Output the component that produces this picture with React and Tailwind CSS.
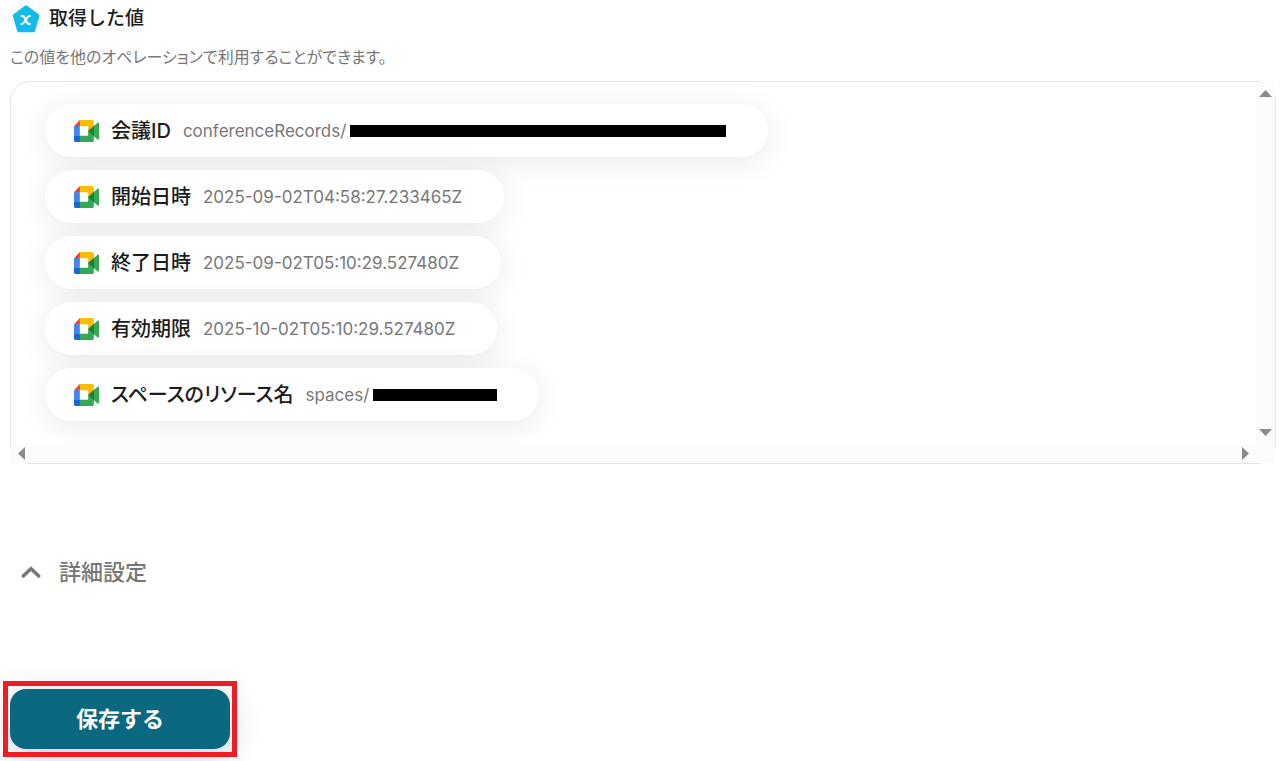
const fields = [
  { label: '会議ID', value: 'conferenceRecords/', hidden: 'w-[376px]' },
  { label: '開始日時', value: '2025-09-02T04:58:27.233465Z' },
  { label: '終了日時', value: '2025-09-02T05:10:29.527480Z' },
  { label: '有効期限', value: '2025-10-02T05:10:29.527480Z' },
  { label: 'スペースのリソース名', value: 'spaces/', hidden: 'w-[124px]' },
];

function ValueBadge() {
  return (
    <svg viewBox="0 0 28 28" className="size-7 shrink-0" aria-hidden="true">
      <path
        d="M14 2.300 L25.600 10.800 L21.300 25.400 H6.900 L2.600 10.800 Z"
        fill="#13baec"
        stroke="#13baec"
        strokeWidth="3.600"
        strokeLinejoin="round"
      />
      <path
        d="M9.600 11 C11.200 10.600 11.800 11.200 12.500 12.600 L14.900 17.400 C15.600 18.800 16.400 19.300 18 19"
        fill="none"
        stroke="#fff"
        strokeWidth="2.200"
        strokeLinecap="round"
      />
      <path
        d="M18 11 C16.600 10.900 16 11.600 15.200 12.700 L12.200 17.300 C11.400 18.500 10.700 19.100 9.400 19"
        fill="none"
        stroke="#fff"
        strokeWidth="1.900"
        strokeLinecap="round"
      />
    </svg>
  );
}

function MeetIcon() {
  return (
    <svg viewBox="0 0 87.5 72" preserveAspectRatio="none" className="h-[22px] w-[25px] shrink-0" aria-hidden="true">
      <path fill="#00832d" d="M49.500 36l8.530 9.750 11.470 7.330 2-17.020-2-16.640-11.690 6.440z" />
      <path fill="#1967d2" d="M0 51.500V66c0 3.315 2.685 6 6 6h14.500l3-10.960-3-9.540-9.950-3z" />
      <path fill="#ea4335" d="M20.500 0L0 20.500l10.550 3 9.950-3 2.950-9.410z" />
      <path fill="#4285f4" d="M20.500 20.500H0v31h20.500z" />
      <path fill="#34a853" d="M82.600 8.680L69.500 19.420v33.660l13.160 10.790c1.970 1.540 4.850.135 4.850-2.370V11c0-2.535-2.945-3.925-4.910-2.320zM49.500 36v15.500h-29V72h43c3.315 0 6-2.685 6-6V53.080z" />
      <path fill="#fbbc04" d="M63.500 0h-43v20.500h29V36l20-16.570V6c0-3.315-2.685-6-6-6z" />
      <path fill="#188038" d="M69.500 19.420v33.660L49.500 36z" />
    </svg>
  );
}

function ScrollArrow({ points, label, className }) {
  return (
    <button type="button" aria-label={label} className="flex items-center justify-center">
      <svg className={className} fill="#8b8b8b" aria-hidden="true">
        <polygon points={points} />
      </svg>
    </button>
  );
}

function Field({ label, value, hidden }) {
  return (
    <li className="flex h-[53px] items-center rounded-full bg-white pr-[42px] pl-[29px] shadow-[0_5px_32px_rgba(0,0,0,0.09)]">
      <MeetIcon />
      <span className="ml-3 text-[20px] leading-7 font-medium text-[#1c1c1c] [font-feature-settings:'palt']">{label}</span>
      <span className="ml-3 text-[17px] leading-6 text-[#777]">{value}</span>
      {hidden && <span className={`ml-1 h-3 bg-black ${hidden}`} />}
    </li>
  );
}

export default function App() {
  return (
    <main className="bg-white px-[10px] pb-3 font-['Inter','Noto_Sans_CJK_JP',sans-serif]">
      <header className="pt-[5px]">
        <h1 className="flex items-center gap-[9px] pl-[2px] text-[19px] leading-7 font-medium text-[#1c1c1c]">
          <ValueBadge />
          取得した値
        </h1>
        <p className="mt-3 text-[16px] leading-6 text-[#777] [font-feature-settings:'palt']">
          この値を他のオペレーションで利用することができます。
        </p>
      </header>

      <section className="mt-3 mr-[-3px] grid grid-cols-[1fr_19px] grid-rows-[1fr_19px] rounded-[20px] border border-[#e5e5e5]">
        <ul className="flex flex-col items-start gap-[13px] overflow-hidden rounded-tl-[19px] px-[34px] pt-[22px] pb-[23px]">
          {fields.map((field) => (
            <Field key={field.label} {...field} />
          ))}
        </ul>
        <div className="flex flex-col justify-between bg-[#fcfcfc] py-2">
          <ScrollArrow label="上へスクロール" points="0,7 6.5,0 13,7" className="h-[7px] w-[13px]" />
          <ScrollArrow label="下へスクロール" points="0,0 6.5,7 13,0" className="h-[7px] w-[13px]" />
        </div>
        <div className="flex items-center justify-between bg-[#fcfcfc] px-[7px]">
          <ScrollArrow label="左へスクロール" points="7,0 0,6.5 7,13" className="h-[13px] w-[7px]" />
          <ScrollArrow label="右へスクロール" points="0,0 7,6.5 0,13" className="h-[13px] w-[7px]" />
        </div>
        <div className="bg-[#fcfcfc]" />
      </section>

      <button
        type="button"
        aria-expanded="false"
        className="mt-[92px] flex items-center gap-[18px] pl-[11px] text-[22px] leading-8 font-medium text-[#777]"
      >
        <svg viewBox="0 0 20 12" className="h-3 w-5" fill="none" stroke="#777" strokeWidth="3.4" strokeLinecap="round" aria-hidden="true">
          <path d="M2.300 10 L10 2.700 L17.700 10" />
        </svg>
        詳細設定
      </button>

      <div className="relative mt-[101px] w-[220px]">
        <button
          type="button"
          className="h-[60px] w-full rounded-[16px] bg-[#0a6880] text-[22px] leading-8 font-bold text-white shadow-[0_6px_30px_rgba(30,60,90,0.25)]"
        >
          保存する
        </button>
        <div className="pointer-events-none absolute -inset-x-[7px] -inset-y-2 border-5 border-[#ee1c25]" />
      </div>
    </main>
  );
}
